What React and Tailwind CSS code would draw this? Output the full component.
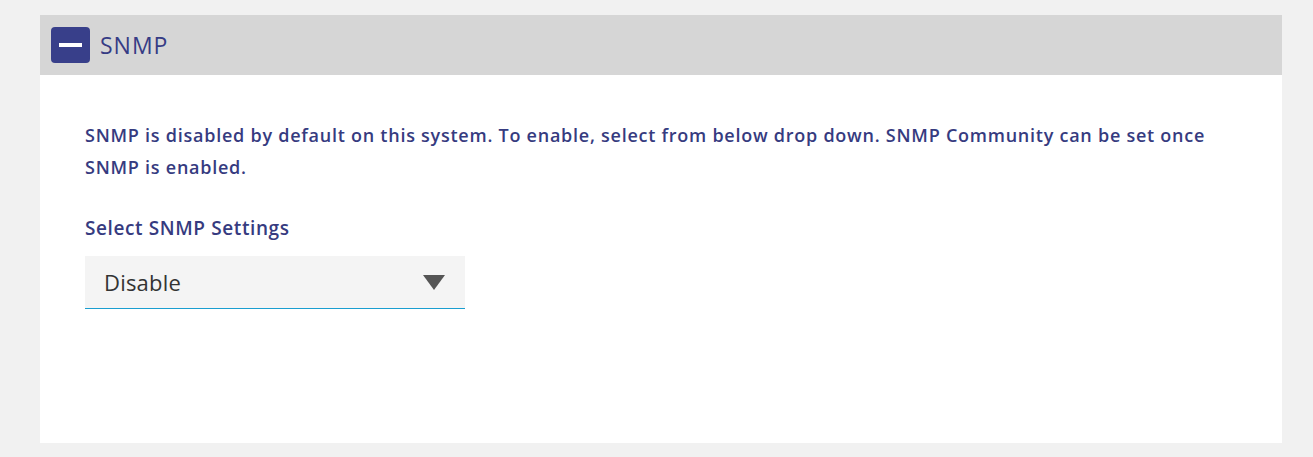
export default function App() {
  const font = { fontFamily: '"Open Sans", "Noto Sans", sans-serif' };
  return (
    <div className="min-h-[457px] w-full bg-[#f1f1f1] pt-[15px] pl-[40px] pr-[31px] pb-[14px]" style={font}>
      <div className="bg-white h-[428px]">
        <div className="h-[60px] bg-[#d6d6d6] flex items-center pl-[11px]">
          <div className="w-[39px] h-[36px] rounded-[4px] bg-[#383f8a] flex items-center justify-center">
            <div className="w-[23px] h-[4px] bg-white" />
          </div>
          <span className="ml-[10px] text-[23px] tracking-[1px] text-[#363c85] font-medium">SNMP</span>
        </div>
        <div className="pl-[45px] pr-[45px] pt-[44px]">
          <p className="text-[18px] leading-[32px] font-semibold tracking-[0.75px] text-[#363b80]">
            SNMP is disabled by default on this system. To enable, select from below drop down. SNMP Community can be set once SNMP is enabled.
          </p>
          <div className="mt-[33px] text-[19px] leading-[24px] font-semibold tracking-[0.6px] text-[#363b80]">Select SNMP Settings</div>
          <div className="mt-[16px] w-[380px] h-[53px] bg-[#f4f4f4] border-b border-[#1a9ed0] flex items-center justify-between pl-[19px] pr-[20px]">
            <span className="text-[22px] tracking-[0.2px] text-[#333333]">Disable</span>
            <svg width="22" height="15" viewBox="0 0 22 15">
              <polygon points="0,0 22,0 11,15" fill="#555555" />
            </svg>
          </div>
        </div>
      </div>
    </div>
  );
}
